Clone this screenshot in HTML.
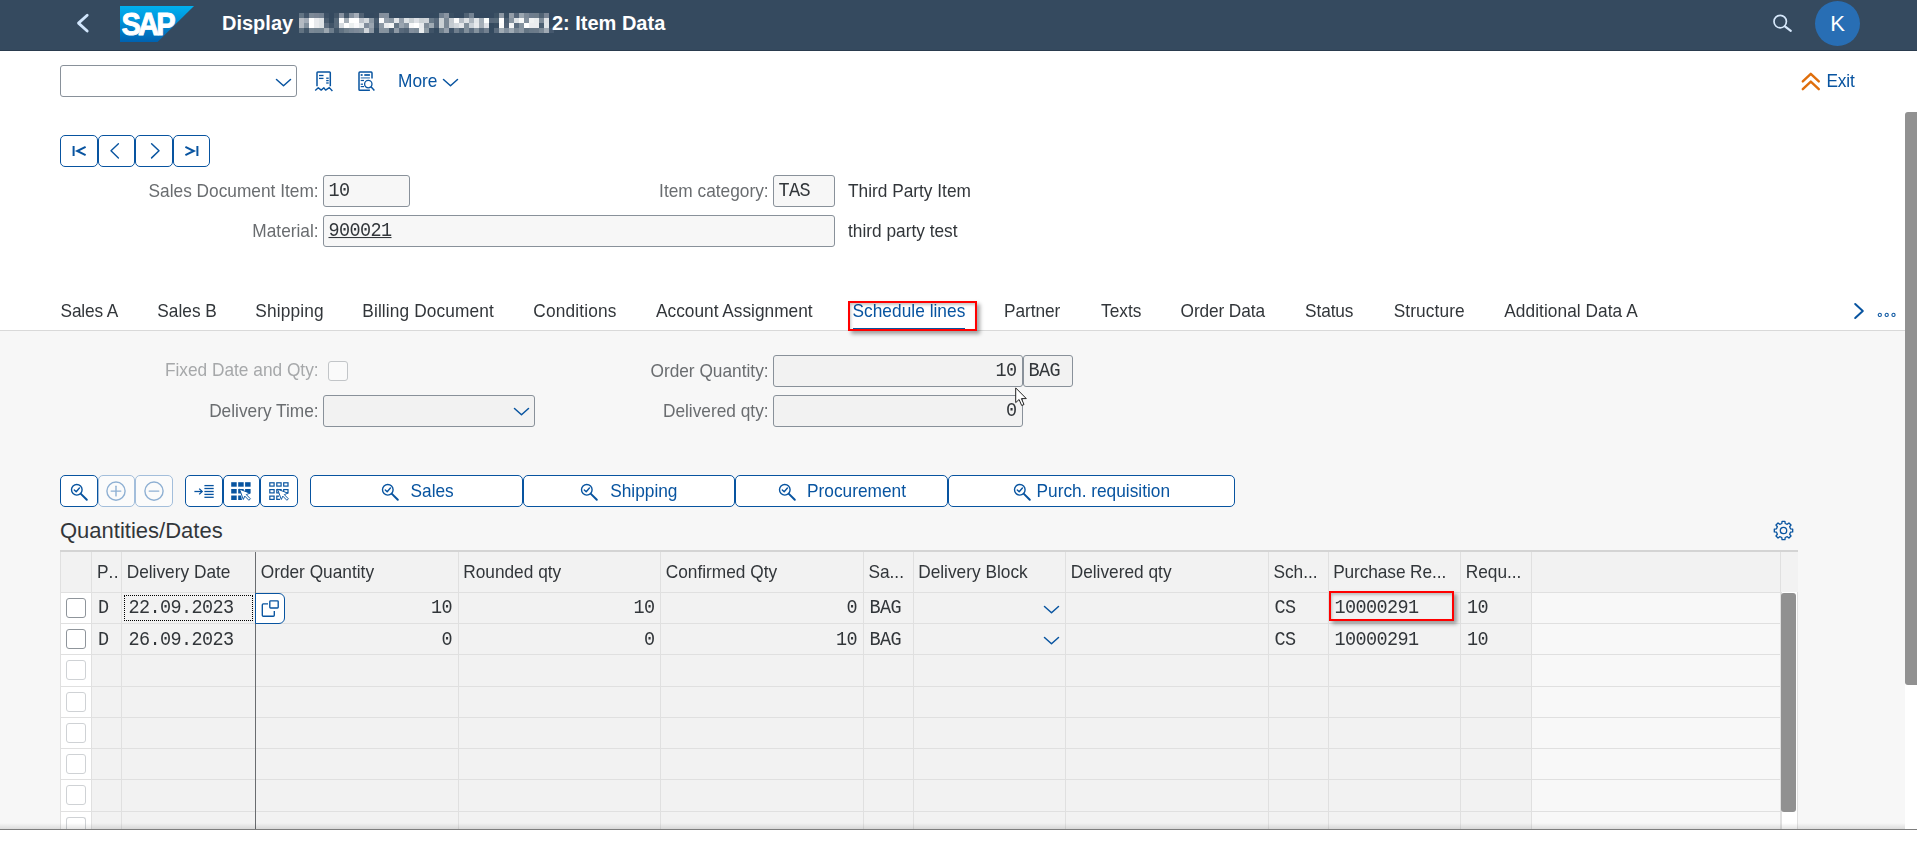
<!DOCTYPE html>
<html lang="en">
<head>
<meta charset="utf-8">
<title>Display Order: Item Data</title>
<style>
*{box-sizing:border-box;margin:0;padding:0}
html,body{width:1917px;height:843px;overflow:hidden;background:#fff}
body{position:relative;font-family:"Liberation Sans",Arial,sans-serif;font-size:17.3px;color:#32363a}
.abs{position:absolute}
.t{position:absolute;white-space:nowrap;line-height:20px;height:20px;transform:scaleY(1.07);transform-origin:0 16px;}
.lbl{position:absolute;white-space:nowrap;line-height:20px;height:20px;transform:scaleY(1.07);transform-origin:0 16px;text-align:right;color:#6a6d70;width:300px}
.mono{font-family:"Liberation Mono","DejaVu Sans Mono",monospace;font-size:18.5px;letter-spacing:-0.6px;transform:scaleY(1.07);transform-origin:0 15px}
.inp{position:absolute;border:1px solid #89919a;border-radius:3px;background:#f7f7f7;height:32px}
.inp.g{background:#f2f2f2}
.inp span{position:absolute;top:5.5px;line-height:20px;white-space:nowrap;color:#32363a}
.btn{position:absolute;border:1px solid #0854a0;border-radius:5px;background:#fff;height:32px;color:#0854a0}
.btn.dis{border-color:#a3bedb;background:#fbfbfb}
.btn .bt{position:absolute;top:4.5px;line-height:20px;white-space:nowrap;transform:scaleY(1.07);transform-origin:0 16px;}
svg{position:absolute;overflow:visible}
#hdr{left:0;top:0;width:1917px;height:51px;background:#354a5f;border-bottom:1px solid #2a3b4e}
#content{left:0;top:330px;width:1905px;height:500px;background:#f7f7f7;border-top:1px solid #d9d9d9}
.tab{position:absolute;top:301px;line-height:20px;white-space:nowrap;color:#32363a;transform:scaleY(1.07);transform-origin:0 16px;}
.vl{position:absolute;width:1px;background:#e0e0e0}
.hl{position:absolute;height:1px;background:#e0e0e0}
.cb{position:absolute;width:20px;height:20px;border:1px solid #b8bcc0;border-radius:3px;background:#fff}
.cell{position:absolute;line-height:20px;white-space:nowrap;color:#32363a}
.hc{position:absolute;top:562px;line-height:20px;white-space:nowrap;color:#32363a;transform:scaleY(1.07);transform-origin:0 16px;}
</style>
</head>
<body>
<div id="hdr" class="abs"></div>
<svg style="left:70px;top:8px" width="30" height="30" viewBox="0 0 30 30"><path d="M17.2 7.2 L8.5 15.1 L17.2 23" fill="none" stroke="#d1e6fc" stroke-width="2.8" stroke-linecap="round" stroke-linejoin="round"/></svg>
<svg style="left:120px;top:6px" width="74" height="36" viewBox="0 0 74 36">
<defs><linearGradient id="sapg" x1="0" y1="0" x2="0" y2="1"><stop offset="0" stop-color="#00b0ee"/><stop offset="0.25" stop-color="#009fe3"/><stop offset="1" stop-color="#0062b1"/></linearGradient></defs>
<polygon points="0,0 74,0 37.5,36 0,36" fill="url(#sapg)"/>
<text x="1.4" y="29.2" font-family="Liberation Sans, Arial, sans-serif" font-weight="700" font-size="31.5" fill="#fff" stroke="#fff" stroke-width="0.9" stroke-linejoin="round" textLength="51.5" lengthAdjust="spacingAndGlyphs" letter-spacing="-3">SAP</text>
</svg>
<svg width="0" height="0" style="left:0;top:0"><defs><filter id="pix" x="0" y="0" width="100%" height="100%" color-interpolation-filters="sRGB"><feGaussianBlur in="SourceGraphic" stdDeviation="1.5" result="b0"/><feComponentTransfer in="b0" result="b"><feFuncR type="linear" slope="1.5" intercept="-0.104"/><feFuncG type="linear" slope="1.5" intercept="-0.145"/><feFuncB type="linear" slope="1.5" intercept="-0.186"/></feComponentTransfer><feFlood x="2" y="2" width="1" height="1"/><feComposite width="5" height="5"/><feTile result="tl"/><feComposite in="b" in2="tl" operator="in"/><feMorphology operator="dilate" radius="2"/></filter></defs></svg>
<div class="t" style="left:222px;top:12px;font-size:20px;font-weight:700;color:#fff;line-height:22px;height:22px;transform:none">Display</div>
<div class="abs" style="left:299px;top:13px;width:255px;height:22px;overflow:hidden;background:#354a5f;filter:url(#pix)"><div class="t" style="left:1.5px;top:-1px;font-size:20px;font-weight:700;color:#fff;line-height:22px;height:22px;transform:none;letter-spacing:-0.22px">HIL Mfg Scrap Order 12501</div></div>
<div class="t" style="left:551.9px;top:12px;font-size:20px;font-weight:700;color:#fff;line-height:22px;height:22px;transform:none">2: Item Data</div>
<svg style="left:1768px;top:10px" width="30" height="30" viewBox="0 0 30 30"><circle cx="12.2" cy="11.6" r="6.2" fill="none" stroke="#d6e8fb" stroke-width="1.7"/><path d="M16.9 16.3 L22.8 20.9" stroke="#d6e8fb" stroke-width="2.2" stroke-linecap="round"/></svg>
<div class="abs" style="left:1815px;top:1px;width:45px;height:45px;border-radius:50%;background:#286eb4;color:#fff;font-size:22px;line-height:45px;text-align:center">K</div>
<div class="inp" style="left:60px;top:65px;width:237px;background:#fff"></div>
<svg style="left:276px;top:78.5px" width="15" height="7.5" viewBox="0 0 15 7.5"><path d="M0.5 0.5 L7.5 6.8 L14.5 0.5" fill="none" stroke="#0854a0" stroke-width="1.5" stroke-linecap="round" stroke-linejoin="round"/></svg>
<svg style="left:315px;top:71px" width="18" height="21" viewBox="0 0 18 21"><g fill="none" stroke="#0854a0" stroke-width="1.5" stroke-linejoin="round">
<path d="M2 15.2 V1.8 Q2 1 2.8 1 H14.5 Q15.3 1 15.3 1.8 V15.2"/>
<path d="M0.2 19.5 L3.3 16.8 L6.2 19.1 L8.9 16.8 L10.6 19.1 L14.3 16.6 L17.4 20" stroke-width="1.4"/>
</g><g stroke="#0854a0" stroke-width="1.3"><path d="M4 4.5 H8.5"/><path d="M4 7.4 H8.5"/><path d="M11.2 7.2 H13.7"/><path d="M11.2 9.6 H13.7"/><path d="M11.2 12 H13.7"/></g></svg>
<svg style="left:358px;top:71px" width="18" height="21" viewBox="0 0 18 21"><g fill="none" stroke="#0854a0" stroke-width="1.5" stroke-linejoin="round">
<path d="M14 7.4 V1.9 Q14 1 13.1 1 H1.9 Q1 1 1 1.9 V18.4 Q1 19.3 1.9 19.3 H11.9"/>
<circle cx="10.3" cy="13.1" r="3.7" stroke-width="1.3"/><path d="M13 15.8 L16.4 19.4" stroke-width="1.5"/></g>
<g stroke="#0854a0"><path d="M2.7 4 H4.6" stroke-width="1.7"/><path d="M6.3 4 H11.9" stroke-width="1.7"/><path d="M2.7 6.9 H11.9" stroke-width="1.3" stroke-opacity="0.7"/><path d="M2.7 9.5 H6" stroke-width="1.2"/><path d="M2.7 13.2 H5" stroke-width="1.2"/><path d="M2.7 15.6 H6" stroke-width="1.2"/></g></svg>
<div class="t" style="left:398px;top:71px;color:#0854a0;font-size:17.3px;letter-spacing:0px">More</div>
<svg style="left:442.6px;top:78.5px" width="15" height="7.5" viewBox="0 0 15 7.5"><path d="M0.5 0.5 L7.5 6.8 L14.5 0.5" fill="none" stroke="#0854a0" stroke-width="1.5" stroke-linecap="round" stroke-linejoin="round"/></svg>
<svg style="left:1801px;top:72px" width="20" height="19" viewBox="0 0 20 19"><g fill="none" stroke="#df6e0c" stroke-width="2.4" stroke-linecap="round" stroke-linejoin="round"><path d="M1.8 9.4 L9.8 1.8 L17.8 9.4"/><path d="M1.8 17.2 L9.8 9.6 L17.8 17.2"/></g></svg>
<div class="t" style="left:1826.5px;top:70.5px;color:#0854a0;font-size:17.3px;letter-spacing:-0.2px">Exit</div>
<div class="btn" style="left:60px;top:135px;width:38px"></div>
<div class="btn" style="left:98px;top:135px;width:37px"></div>
<div class="btn" style="left:135px;top:135px;width:38px"></div>
<div class="btn" style="left:173px;top:135px;width:37px"></div>
<svg style="left:69px;top:143px" width="20" height="16" viewBox="0 0 20 16"><g fill="none" stroke="#0854a0" stroke-width="2" stroke-linecap="butt"><path d="M4.6 3 V13"/><path d="M16.6 3.9 L8.2 8 L16.6 12.1"/></g></svg>
<svg style="left:105.2px;top:143px" width="20" height="16" viewBox="0 0 20 16"><path d="M13.4 0.7 L6 7.8 L13.4 14.9" fill="none" stroke="#0854a0" stroke-width="1.4" stroke-linecap="round" stroke-linejoin="round"/></svg>
<svg style="left:144.6px;top:143px" width="20" height="16" viewBox="0 0 20 16"><path d="M6.6 0.7 L14 7.8 L6.6 14.9" fill="none" stroke="#0854a0" stroke-width="1.5" stroke-linecap="round" stroke-linejoin="round"/></svg>
<svg style="left:181.5px;top:143px" width="20" height="16" viewBox="0 0 20 16"><g fill="none" stroke="#0854a0" stroke-width="2" stroke-linecap="butt"><path d="M15.4 3 V13"/><path d="M3.4 3.9 L11.8 8 L3.4 12.1"/></g></svg>
<div class="lbl" style="left:18.6px;top:181px">Sales Document Item:</div>
<div class="inp" style="left:323px;top:175px;width:87px"><span class="mono" style="left:4.5px">10</span></div>
<div class="lbl" style="left:468.6px;top:181px">Item category:</div>
<div class="inp" style="left:773px;top:175px;width:62px"><span class="mono" style="left:4.5px">TAS</span></div>
<div class="t" style="left:848px;top:181px">Third Party Item</div>
<div class="lbl" style="left:18.6px;top:221px">Material:</div>
<div class="inp" style="left:323px;top:215px;width:512px"><span class="mono" style="left:4.5px;text-decoration:underline;text-underline-offset:0.5px;text-decoration-thickness:1px">900021</span></div>
<div class="t" style="left:848px;top:221px">third party test</div>
<div class="tab" style="left:60.5px;letter-spacing:-0.15px">Sales A</div>
<div class="tab" style="left:157.3px">Sales B</div>
<div class="tab" style="left:255.3px;letter-spacing:0.15px">Shipping</div>
<div class="tab" style="left:362.3px;letter-spacing:0.12px">Billing Document</div>
<div class="tab" style="left:533.3px;letter-spacing:0.15px">Conditions</div>
<div class="tab" style="left:656px">Account Assignment</div>
<div class="tab" style="left:852.5px;color:#0854a0;letter-spacing:0.03px">Schedule lines</div>
<div class="tab" style="left:1004px;letter-spacing:-0.05px">Partner</div>
<div class="tab" style="left:1101px">Texts</div>
<div class="tab" style="left:1180.6px;letter-spacing:-0.12px">Order Data</div>
<div class="tab" style="left:1305px;letter-spacing:-0.1px">Status</div>
<div class="tab" style="left:1393.7px;letter-spacing:0.1px">Structure</div>
<div class="tab" style="left:1504.3px;letter-spacing:0.05px">Additional Data A</div>
<div class="abs" style="left:852.5px;top:327.5px;width:112.4px;height:3px;background:#0854a0"></div>
<div id="content" class="abs"></div>
<div class="abs" style="left:848px;top:301px;width:129px;height:30px;border:2px solid #ff0000;box-shadow:3px 3px 4px rgba(0,0,0,0.36), inset 1px 2px 3px rgba(0,0,0,0.22)"></div>
<svg style="left:1853px;top:302px" width="12" height="18" viewBox="0 0 12 18"><path d="M2.2 2 L9.8 9 L2.2 16" fill="none" stroke="#0854a0" stroke-width="2" stroke-linecap="round" stroke-linejoin="round"/></svg>
<svg style="left:1876px;top:311px" width="22" height="8" viewBox="0 0 22 8"><g fill="none" stroke="#0854a0" stroke-width="1.1"><circle cx="3.8" cy="3.9" r="1.6"/><circle cx="10.7" cy="3.9" r="1.6"/><circle cx="17.5" cy="3.9" r="1.6"/></g></svg>
<div class="lbl" style="left:18.6px;top:360px;color:#a6a8aa">Fixed Date and Qty:</div>
<div class="cb" style="left:328px;top:361px;border-color:#c2c5c8;background:#fafafa"></div>
<div class="lbl" style="left:468.6px;top:361px">Order Quantity:</div>
<div class="inp g" style="left:773px;top:355px;width:250px"><span class="mono" style="right:5.5px">10</span></div>
<div class="inp g" style="left:1023px;top:355px;width:50px"><span class="mono" style="left:4.6px">BAG</span></div>
<div class="lbl" style="left:18.6px;top:401px">Delivery Time:</div>
<div class="inp g" style="left:323px;top:395px;width:212px"></div>
<svg style="left:513.5px;top:407.5px" width="15" height="7.5" viewBox="0 0 15 7.5"><path d="M0.5 0.5 L7.5 6.8 L14.5 0.5" fill="none" stroke="#0854a0" stroke-width="1.5" stroke-linecap="round" stroke-linejoin="round"/></svg>
<div class="lbl" style="left:468.6px;top:401px">Delivered qty:</div>
<div class="inp g" style="left:773px;top:395px;width:250px"><span class="mono" style="right:5.5px">0</span></div>
<svg style="left:1015px;top:387px" width="13" height="20" viewBox="0 0 13 20"><path d="M0.7 0.9 V15.6 L4.1 12.5 L6.7 18.5 L9 17.5 L6.4 11.6 H11.3 Z" fill="#fff" stroke="#222" stroke-width="1" stroke-linejoin="round"/></svg>
<div class="btn " style="left:60px;top:475px;width:38px"></div>
<div class="btn dis" style="left:98px;top:475px;width:37px"></div>
<div class="btn dis" style="left:135px;top:475px;width:38px"></div>
<div class="btn " style="left:185px;top:475px;width:38px"></div>
<div class="btn " style="left:223px;top:475px;width:37px"></div>
<div class="btn " style="left:260px;top:475px;width:38px"></div>
<svg style="left:69.8px;top:482.8px" width="19" height="19" viewBox="0 0 19 19"><g fill="none" stroke="#0854a0" stroke-linecap="round" stroke-linejoin="round"><circle cx="6.8" cy="6.8" r="5.3" stroke-width="1.4"/><path d="M10.9 10.9 L16.8 16.8" stroke-width="2"/><path d="M4.3 6.9 L6.2 8.8 L9.4 5" stroke-width="1.4"/></g></svg>
<svg style="left:106px;top:481px" width="20" height="20" viewBox="0 0 20 20"><g fill="none" stroke="#8fb0d3" stroke-width="1.4" stroke-linecap="round"><circle cx="10" cy="10.1" r="9.1"/><path d="M5.2 10.1 H14.8"/><path d="M10 5.3 V14.9"/></g></svg>
<svg style="left:143.9px;top:481px" width="20" height="20" viewBox="0 0 20 20"><g fill="none" stroke="#8fb0d3" stroke-width="1.4" stroke-linecap="round"><circle cx="10" cy="10.1" r="9.1"/><path d="M5.2 10.1 H14.8"/></g></svg>
<svg style="left:194px;top:483px" width="20" height="17" viewBox="0 0 20 17"><g fill="none" stroke="#0854a0" stroke-width="1.3" stroke-linecap="butt" stroke-linejoin="miter"><path d="M0.4 8.5 H8"/><path d="M5.2 5.6 L8.2 8.5 L5.2 11.4"/><path d="M10.4 2.6 H19.7"/><path d="M10.4 5.5 H19.7"/><path d="M10.4 8.5 H19.7"/><path d="M10.4 11.4 H19.7"/><path d="M10.4 14.3 H19.7"/></g></svg>
<svg style="left:231px;top:481px" width="21" height="20" viewBox="0 0 21 20"><rect x="0.2" y="1.2" width="5.5" height="4.5" fill="#0854a0"/><rect x="7.2" y="1.2" width="5.5" height="4.5" fill="#0854a0"/><rect x="14.1" y="1.2" width="5.5" height="4.5" fill="#0854a0"/><rect x="0.2" y="8.0" width="5.5" height="4.5" fill="#0854a0"/><rect x="7.2" y="8.0" width="5.5" height="4.5" fill="#0854a0"/><rect x="14.1" y="8.0" width="5.5" height="4.5" fill="#0854a0"/><rect x="0.2" y="14.5" width="5.5" height="4.5" fill="#0854a0"/><path d="M7.2 14.5 H10 L11 19 H7.2 Z" fill="#0854a0"/><path d="M8.6 8.2 L18.9 12.2 L15.3 13.6 L19.4 17.8 L17.9 19.3 L13.8 15.1 L12.3 18.5 Z" fill="#fff" stroke="#0854a0" stroke-width="0.95" stroke-linejoin="round"/></svg>
<svg style="left:268.8px;top:481px" width="21" height="20" viewBox="0 0 21 20"><rect x="0.8" y="1.7999999999999998" width="4.3" height="3.3" fill="none" stroke="#0854a0" stroke-width="1.2"/><rect x="7.8" y="1.7999999999999998" width="4.3" height="3.3" fill="none" stroke="#0854a0" stroke-width="1.2"/><rect x="14.7" y="1.7999999999999998" width="4.3" height="3.3" fill="none" stroke="#0854a0" stroke-width="1.2"/><rect x="0.8" y="8.6" width="4.3" height="3.3" fill="none" stroke="#0854a0" stroke-width="1.2"/><rect x="7.8" y="8.6" width="4.3" height="3.3" fill="none" stroke="#0854a0" stroke-width="1.2"/><rect x="14.7" y="8.6" width="4.3" height="3.3" fill="none" stroke="#0854a0" stroke-width="1.2"/><rect x="0.8" y="15.1" width="4.3" height="3.3" fill="none" stroke="#0854a0" stroke-width="1.2"/><path d="M10 15.1 H7.8 V18.4 H11" fill="none" stroke="#0854a0" stroke-width="1.2"/><path d="M8.6 8.2 L18.9 12.2 L15.3 13.6 L19.4 17.8 L17.9 19.3 L13.8 15.1 L12.3 18.5 Z" fill="#fff" stroke="#0854a0" stroke-width="0.95" stroke-linejoin="round"/></svg>
<div class="btn" style="left:310px;top:475px;width:213px"><span class="bt" style="left:99.5px">Sales</span></div>
<svg style="left:380.7px;top:482.8px" width="19" height="19" viewBox="0 0 19 19"><g fill="none" stroke="#0854a0" stroke-linecap="round" stroke-linejoin="round"><circle cx="6.8" cy="6.8" r="5.3" stroke-width="1.4"/><path d="M10.9 10.9 L16.8 16.8" stroke-width="2"/><path d="M4.3 6.9 L6.2 8.8 L9.4 5" stroke-width="1.4"/></g></svg>
<div class="btn" style="left:523px;top:475px;width:212px"><span class="bt" style="left:86.2px">Shipping</span></div>
<svg style="left:580.4px;top:482.8px" width="19" height="19" viewBox="0 0 19 19"><g fill="none" stroke="#0854a0" stroke-linecap="round" stroke-linejoin="round"><circle cx="6.8" cy="6.8" r="5.3" stroke-width="1.4"/><path d="M10.9 10.9 L16.8 16.8" stroke-width="2"/><path d="M4.3 6.9 L6.2 8.8 L9.4 5" stroke-width="1.4"/></g></svg>
<div class="btn" style="left:735px;top:475px;width:213px"><span class="bt" style="left:71.0px">Procurement</span></div>
<svg style="left:778.1px;top:482.8px" width="19" height="19" viewBox="0 0 19 19"><g fill="none" stroke="#0854a0" stroke-linecap="round" stroke-linejoin="round"><circle cx="6.8" cy="6.8" r="5.3" stroke-width="1.4"/><path d="M10.9 10.9 L16.8 16.8" stroke-width="2"/><path d="M4.3 6.9 L6.2 8.8 L9.4 5" stroke-width="1.4"/></g></svg>
<div class="btn" style="left:948px;top:475px;width:287px"><span class="bt" style="left:87.5px">Purch. requisition</span></div>
<svg style="left:1012.8px;top:482.8px" width="19" height="19" viewBox="0 0 19 19"><g fill="none" stroke="#0854a0" stroke-linecap="round" stroke-linejoin="round"><circle cx="6.8" cy="6.8" r="5.3" stroke-width="1.4"/><path d="M10.9 10.9 L16.8 16.8" stroke-width="2"/><path d="M4.3 6.9 L6.2 8.8 L9.4 5" stroke-width="1.4"/></g></svg>
<div class="t" style="left:60px;top:518px;font-size:22px;line-height:26px;height:26px;color:#32363a;transform:none">Quantities/Dates</div>
<svg style="left:1772.5px;top:520.4px" width="21" height="21" viewBox="0 0 21 21"><g fill="none" stroke="#0854a0" stroke-width="1.3" stroke-linejoin="round"><path d="M17.50 8.82 L19.69 9.05 L19.69 11.95 L17.50 12.18 L16.64 14.26 L18.02 15.97 L15.97 18.02 L14.26 16.64 L12.18 17.50 L11.95 19.69 L9.05 19.69 L8.82 17.50 L6.74 16.64 L5.03 18.02 L2.98 15.97 L4.36 14.26 L3.50 12.18 L1.31 11.95 L1.31 9.05 L3.50 8.82 L4.36 6.74 L2.98 5.03 L5.03 2.98 L6.74 4.36 L8.82 3.50 L9.05 1.31 L11.95 1.31 L12.18 3.50 L14.26 4.36 L15.97 2.98 L18.02 5.03 L16.64 6.74 Z"/><circle cx="10.5" cy="10.5" r="3.2"/></g></svg>
<div class="abs" style="left:60px;top:550px;width:1738px;height:2px;background:#d4d4d4"></div>
<div class="abs" style="left:60px;top:552px;width:1738px;height:40px;background:#f2f2f2"></div>
<div class="abs" style="left:60px;top:592px;width:1471px;height:237px;background:#f2f2f2"></div>
<div class="abs" style="left:60px;top:592px;width:32px;height:237px;background:#fff"></div>
<div class="abs" style="left:1532px;top:592px;width:249px;height:237px;background:#f8f8f8"></div>
<div class="abs" style="left:1781px;top:592px;width:17px;height:237px;background:#fff;border-left:1px solid #e0e0e0;border-right:1px solid #e0e0e0"></div>
<div class="abs" style="left:1781px;top:593px;width:15px;height:219px;background:#919191;border-radius:3px"></div>
<div class="hl" style="left:60px;top:592px;width:1721px"></div>
<div class="hl" style="left:60px;top:623px;width:1721px"></div>
<div class="hl" style="left:60px;top:654px;width:1721px"></div>
<div class="hl" style="left:60px;top:686px;width:1721px"></div>
<div class="hl" style="left:60px;top:717px;width:1721px"></div>
<div class="hl" style="left:60px;top:748px;width:1721px"></div>
<div class="hl" style="left:60px;top:779px;width:1721px"></div>
<div class="hl" style="left:60px;top:811px;width:1721px"></div>
<div class="vl" style="left:60px;top:552px;height:277px"></div>
<div class="vl" style="left:91px;top:552px;height:277px"></div>
<div class="vl" style="left:121px;top:552px;height:277px"></div>
<div class="vl" style="left:458px;top:552px;height:277px"></div>
<div class="vl" style="left:660px;top:552px;height:277px"></div>
<div class="vl" style="left:863px;top:552px;height:277px"></div>
<div class="vl" style="left:913px;top:552px;height:277px"></div>
<div class="vl" style="left:1065px;top:552px;height:277px"></div>
<div class="vl" style="left:1268px;top:552px;height:277px"></div>
<div class="vl" style="left:1328px;top:552px;height:277px"></div>
<div class="vl" style="left:1460px;top:552px;height:277px"></div>
<div class="vl" style="left:1531px;top:552px;height:277px"></div>
<div class="vl" style="left:1780px;top:552px;height:277px"></div>
<div class="vl" style="left:255px;top:552px;height:277px;background:#6a6d70"></div>
<div class="hc" style="left:96.9px">P<span style="letter-spacing:0.6px">..</span></div>
<div class="hc" style="left:126.7px">Delivery Date</div>
<div class="hc" style="left:260.7px">Order Quantity</div>
<div class="hc" style="left:463.2px">Rounded qty</div>
<div class="hc" style="left:665.7px">Confirmed Qty</div>
<div class="hc" style="left:868.4px">Sa...</div>
<div class="hc" style="left:918.2px">Delivery Block</div>
<div class="hc" style="left:1070.7px">Delivered qty</div>
<div class="hc" style="left:1273.4px">Sch...</div>
<div class="hc" style="left:1333.2px"><span style="letter-spacing:-0.1px">Purchase Re...</span></div>
<div class="hc" style="left:1465.7px">Requ...</div>
<div class="cb" style="left:66px;top:598px;border-color:#8f959b"></div>
<div class="cb" style="left:66px;top:629px;border-color:#8f959b"></div>
<div class="cb" style="left:66px;top:660px;border-color:#cfd2d5"></div>
<div class="cb" style="left:66px;top:692px;border-color:#cfd2d5"></div>
<div class="cb" style="left:66px;top:723px;border-color:#cfd2d5"></div>
<div class="cb" style="left:66px;top:754px;border-color:#cfd2d5"></div>
<div class="cb" style="left:66px;top:785px;border-color:#cfd2d5"></div>
<div class="cb" style="left:66px;top:817px;height:12px;border-bottom:none;border-radius:3px 3px 0 0;border-color:#cfd2d5"></div>
<div class="cell mono" style="left:98px;top:599.2px">D</div>
<div class="cell mono" style="left:128.5px;top:599.2px">22.09.2023</div>
<div class="cell mono" style="right:1465px;top:599.2px">10</div>
<div class="cell mono" style="right:1262.5px;top:599.2px">10</div>
<div class="cell mono" style="right:1060px;top:599.2px">0</div>
<div class="cell mono" style="left:869.6px;top:599.2px">BAG</div>
<svg style="left:1044px;top:605.5px" width="15" height="7.5" viewBox="0 0 15 7.5"><path d="M0.5 0.5 L7.5 6.8 L14.5 0.5" fill="none" stroke="#0854a0" stroke-width="1.5" stroke-linecap="round" stroke-linejoin="round"/></svg>
<div class="cell mono" style="left:1274.6px;top:599.2px">CS</div>
<div class="cell mono" style="left:1334.5px;top:599.2px">10000291</div>
<div class="cell mono" style="left:1467px;top:599.2px">10</div>
<div class="cell mono" style="left:98px;top:631.2px">D</div>
<div class="cell mono" style="left:128.5px;top:631.2px">26.09.2023</div>
<div class="cell mono" style="right:1465px;top:631.2px">0</div>
<div class="cell mono" style="right:1262.5px;top:631.2px">0</div>
<div class="cell mono" style="right:1060px;top:631.2px">10</div>
<div class="cell mono" style="left:869.6px;top:631.2px">BAG</div>
<svg style="left:1044px;top:636.5px" width="15" height="7.5" viewBox="0 0 15 7.5"><path d="M0.5 0.5 L7.5 6.8 L14.5 0.5" fill="none" stroke="#0854a0" stroke-width="1.5" stroke-linecap="round" stroke-linejoin="round"/></svg>
<div class="cell mono" style="left:1274.6px;top:631.2px">CS</div>
<div class="cell mono" style="left:1334.5px;top:631.2px">10000291</div>
<div class="cell mono" style="left:1467px;top:631.2px">10</div>
<div class="abs" style="left:124px;top:595px;width:129px;height:26px;border:1px dotted #000"></div>
<div class="btn" style="left:255px;top:593px;width:30px;height:30.5px;border-radius:0 6px 6px 0"></div>
<svg style="left:261px;top:599px" width="18" height="18" viewBox="0 0 18 18"><g fill="none" stroke="#0854a0" stroke-width="1.35" stroke-linejoin="round"><path d="M7 4.9 H2.3 Q1.3 4.9 1.3 5.9 V16.2 Q1.3 17.2 2.3 17.2 H12.3 Q13.3 17.2 13.3 16.2 V12"/><rect x="8.8" y="1.8" width="8.4" height="7.2" rx="0.8"/></g></svg>
<div class="abs" style="left:1329px;top:591px;width:125px;height:30px;border:2px solid #ff0000;box-shadow:3px 3px 4px rgba(0,0,0,0.36), inset 1px 2px 3px rgba(0,0,0,0.22)"></div>
<div class="abs" style="left:0;top:829px;width:1917px;height:14px;background:#fff;border-top:1px solid #7d7d7d"></div>
<div class="abs" style="left:0;top:826px;width:1905px;height:6px;margin-top:-3px;background:linear-gradient(to bottom,rgba(0,0,0,0),rgba(0,0,0,0.11))"></div>
<div class="abs" style="left:1905px;top:51px;width:12px;height:778px;background:#fff"></div>
<div class="abs" style="left:1905px;top:111.5px;width:12px;height:573.5px;background:#919191;border-radius:3px 0 0 3px"></div>
</body>
</html>
